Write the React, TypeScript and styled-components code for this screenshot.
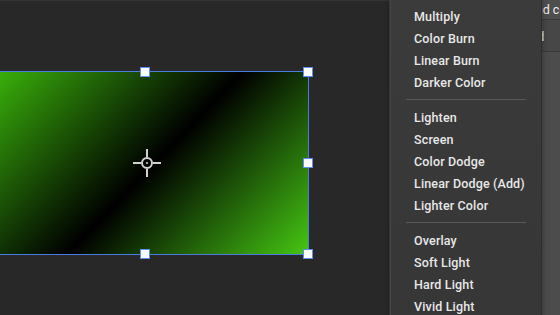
import React from 'react';
import styled, { createGlobalStyle } from 'styled-components';

const GlobalStyle = createGlobalStyle`
  html, body {
    margin: 0;
    padding: 0;
    background: #282828;
    overflow: hidden;
  }
`;

const Screen = styled.div`
  position: relative;
  width: 560px;
  height: 315px;
  display: flex;
  overflow: hidden;
  font-family: Roboto, 'Helvetica Neue', Arial, sans-serif;
`;

const Canvas = styled.div`
  position: relative;
  flex: 1;
  background: #282828;
  border-top: 1px solid #333;
`;

const Shape = styled.div`
  position: absolute;
  left: -18px;
  top: 71px;
  width: 326px;
  height: 182px;
  background: linear-gradient(134deg, #3dbb0c 0%, #000 52%, #45c613 100%);
  outline: 1px solid #4a7be0;
`;

const Handle = styled.div<{ x: string; y: string }>`
  position: absolute;
  left: ${p => p.x};
  top: ${p => p.y};
  width: 8px;
  height: 8px;
  margin: -5px 0 0 -5px;
  background: #fafcff;
  border: 1px solid #5d8ff0;
`;

const Crosshair = styled.svg`
  position: absolute;
  left: 50%;
  top: 50%;
  width: 30px;
  height: 30px;
  margin: -15px 0 0 -13px;
`;

const SidePanel = styled.div`
  width: 170px;
  display: flex;
  flex-direction: column;
  background: #484848;
  border-left: 1px solid #3e3e3e;
`;

const PanelRow = styled.div<{ tall?: boolean; shade: string; indent: number }>`
  height: ${p => (p.tall ? '29px' : '19px')};
  display: flex;
  align-items: center;
  padding-left: ${p => p.indent}px;
  padding-top: ${p => (p.tall ? '2px' : '0')};
  background: ${p => p.shade};
  border-bottom: 1px solid #3a3a3a;
  color: #ececec;
  font-size: 12.5px;
  white-space: nowrap;
  overflow: hidden;
`;

const PanelFill = styled.div`
  flex: 1;
  background: linear-gradient(90deg, #474747, #4c4c4c);
`;

const Menu = styled.div`
  position: absolute;
  left: 390px;
  top: 0;
  width: 150px;
  height: 340px;
  padding-top: 5px;
  background: linear-gradient(180deg, #3b3b3b 0%, #363636 100%);
  border-left: 1px solid #454545;
  border-right: 1px solid #2e2e2e;
  box-shadow: 0 0 6px rgba(0, 0, 0, 0.35);
`;

const MenuItem = styled.div`
  height: 22px;
  display: flex;
  align-items: center;
  padding-left: 23px;
  color: #e8e8e8;
  font-size: 12.5px;
  font-weight: 500;
  letter-spacing: 0.15px;
  white-space: nowrap;
`;

const Separator = styled.div`
  height: 1px;
  margin: 6px 15px;
  background: #595959;
`;

const groups = [
  ['Multiply', 'Color Burn', 'Linear Burn', 'Darker Color'],
  ['Lighten', 'Screen', 'Color Dodge', 'Linear Dodge (Add)', 'Lighter Color'],
  ['Overlay', 'Soft Light', 'Hard Light', 'Vivid Light'],
];

export default function App() {
  return (
    <Screen>
      <GlobalStyle />
      <Canvas>
        <Shape>
          <Crosshair viewBox="0 0 30 30">
            <g stroke="#d2d2d2" strokeWidth="2" fill="none">
              <circle cx="15" cy="15" r="5" />
              <line x1="15" y1="1" x2="15" y2="9" />
              <line x1="15" y1="21" x2="15" y2="29" />
              <line x1="1" y1="15" x2="9" y2="15" />
              <line x1="21" y1="15" x2="29" y2="15" />
            </g>
            <circle cx="15" cy="15" r="1" fill="#d2d2d2" />
          </Crosshair>
          <Handle x="50%" y="0" />
          <Handle x="100%" y="0" />
          <Handle x="100%" y="50%" />
          <Handle x="50%" y="100%" />
          <Handle x="100%" y="100%" />
        </Shape>
      </Canvas>
      <SidePanel>
        <PanelRow shade="#4e4e4e" indent={139}>and color</PanelRow>
        <PanelRow tall shade="#474747" indent={123}>Blend</PanelRow>
        <PanelFill />
      </SidePanel>
      <Menu>
        {groups.map((items, i) => (
          <React.Fragment key={i}>
            {i > 0 && <Separator />}
            {items.map(label => (
              <MenuItem key={label}>{label}</MenuItem>
            ))}
          </React.Fragment>
        ))}
      </Menu>
    </Screen>
  );
}
